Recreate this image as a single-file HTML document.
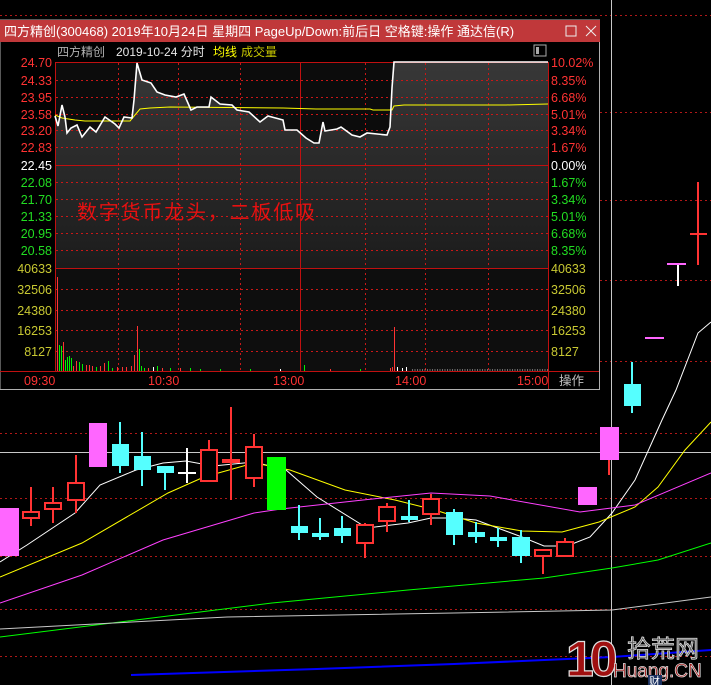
<!DOCTYPE html>
<html><head><meta charset="utf-8"><style>
html,body{margin:0;padding:0;background:#000;width:711px;height:685px;overflow:hidden}
svg{display:block}
text{font-family:"Liberation Sans","Noto Sans CJK SC",sans-serif}
</style></head><body>
<svg width="711" height="685" viewBox="0 0 711 685" xmlns="http://www.w3.org/2000/svg">
<rect width="711" height="685" fill="#000"/>
<g stroke="#b01818" stroke-width="1" stroke-dasharray="2 3">
<line x1="0" y1="15.5" x2="711" y2="15.5"/>
<line x1="0" y1="112.5" x2="711" y2="112.5"/>
<line x1="0" y1="200.5" x2="711" y2="200.5"/>
<line x1="0" y1="280.5" x2="711" y2="280.5"/>
<line x1="0" y1="361.5" x2="711" y2="361.5"/>
<line x1="0" y1="433.5" x2="711" y2="433.5"/>
<line x1="0" y1="498.5" x2="711" y2="498.5"/>
<line x1="0" y1="556.5" x2="711" y2="556.5"/>
<line x1="0" y1="609.5" x2="711" y2="609.5"/>
<line x1="0" y1="656.5" x2="711" y2="656.5"/>
</g>
<line x1="0" y1="452.5" x2="711" y2="452.5" stroke="#c8c8c8"/>
<line x1="611.5" y1="0" x2="611.5" y2="685" stroke="#c8c8c8"/>
<g fill="none" stroke-width="1">
<polyline stroke="#ffffff" points="0,562 27,545 75,513 100,485 136,470 163,463 186,461 213,466 254,462 286,470 317,497 367,528 408,523 431,518 454,518 476,520 522,537 544,546 567,546 590,537 612,513 635,480 653,440 662,420 676,390 698,333 711,322"/>
<polyline stroke="#ffff00" points="0,577 82,543 168,493 204,477 254,463 290,470 345,490 395,500 435,510 476,523 522,531 562,532 599,522 635,507 658,487 685,450 711,422"/>
<polyline stroke="#ff40ff" points="0,603 82,575 163,540 254,513 281,509 363,500 431,493 490,496 580,512 635,505 711,473"/>
<polyline stroke="#00ff00" points="0,637 136,620 272,603 408,590 544,578 612,568 658,560 711,543"/>
<polyline stroke="#c8c8c8" points="0,629 227,617 454,613 612,610 711,597"/>
<polyline stroke="#0000ff" stroke-width="2" points="131,675 317,669 454,664 612,657 711,650"/>
</g>
<g stroke-width="2">
<rect x="0" y="508" width="19" height="48" fill="#ff66ff"/>
<line x1="31" y1="487" x2="31" y2="526" stroke="#ff3333"/><rect x="23" y="512" width="16" height="6" fill="#000" stroke="#ff3333"/>
<line x1="53" y1="487" x2="53" y2="523" stroke="#ff3333"/><rect x="45" y="503" width="16" height="6" fill="#000" stroke="#ff3333"/>
<line x1="76" y1="455" x2="76" y2="513" stroke="#ff3333"/><rect x="68" y="483" width="16" height="17" fill="#000" stroke="#ff3333"/>
<rect x="89" y="423" width="18" height="44" fill="#ff66ff"/>
<line x1="120" y1="422" x2="120" y2="473" stroke="#55ffff"/><rect x="112" y="444" width="17" height="22" fill="#55ffff" stroke="none"/>
<line x1="142" y1="432" x2="142" y2="486" stroke="#55ffff"/><rect x="134" y="456" width="17" height="14" fill="#55ffff" stroke="none"/>
<line x1="165" y1="466" x2="165" y2="490" stroke="#55ffff"/><rect x="157" y="466" width="17" height="7" fill="#55ffff" stroke="none"/>
<line x1="187" y1="448" x2="187" y2="483" stroke="#fff"/><line x1="178" y1="473" x2="196" y2="473" stroke="#fff"/>
<line x1="209" y1="440" x2="209" y2="481" stroke="#ff3333"/><rect x="201" y="450" width="16" height="31" fill="#000" stroke="#ff3333"/>
<line x1="231" y1="407" x2="231" y2="500" stroke="#ff3333"/><rect x="222" y="459" width="18" height="4" fill="#ff3333" stroke="none"/>
<line x1="254" y1="434" x2="254" y2="487" stroke="#ff3333"/><rect x="246" y="447" width="16" height="31" fill="#000" stroke="#ff3333"/>
<rect x="267" y="457" width="19" height="53" fill="#00ff00"/>
<line x1="299" y1="505" x2="299" y2="540" stroke="#55ffff"/><rect x="291" y="526" width="17" height="7" fill="#55ffff" stroke="none"/>
<line x1="320" y1="518" x2="320" y2="540" stroke="#55ffff"/><rect x="312" y="533" width="17" height="4" fill="#55ffff" stroke="none"/>
<line x1="342" y1="516" x2="342" y2="543" stroke="#55ffff"/><rect x="334" y="528" width="17" height="8" fill="#55ffff" stroke="none"/>
<line x1="365" y1="523" x2="365" y2="558" stroke="#ff3333"/><rect x="357" y="525" width="16" height="18" fill="#000" stroke="#ff3333"/>
<line x1="387" y1="503" x2="387" y2="532" stroke="#ff3333"/><rect x="379" y="507" width="16" height="14" fill="#000" stroke="#ff3333"/>
<line x1="409" y1="500" x2="409" y2="522" stroke="#55ffff"/><rect x="401" y="516" width="17" height="4" fill="#55ffff" stroke="none"/>
<line x1="431" y1="494" x2="431" y2="525" stroke="#ff3333"/><rect x="423" y="499" width="16" height="15" fill="#000" stroke="#ff3333"/>
<line x1="454" y1="509" x2="454" y2="545" stroke="#55ffff"/><rect x="446" y="512" width="17" height="23" fill="#55ffff" stroke="none"/>
<line x1="476" y1="522" x2="476" y2="543" stroke="#55ffff"/><rect x="468" y="532" width="17" height="5" fill="#55ffff" stroke="none"/>
<line x1="498" y1="528" x2="498" y2="547" stroke="#55ffff"/><rect x="490" y="537" width="17" height="4" fill="#55ffff" stroke="none"/>
<line x1="521" y1="530" x2="521" y2="563" stroke="#55ffff"/><rect x="512" y="537" width="18" height="19" fill="#55ffff" stroke="none"/>
<line x1="543" y1="549" x2="543" y2="574" stroke="#ff3333"/><rect x="535" y="550" width="16" height="6" fill="#000" stroke="#ff3333"/>
<line x1="565" y1="538" x2="565" y2="556" stroke="#ff3333"/><rect x="557" y="542" width="16" height="14" fill="#000" stroke="#ff3333"/>
<rect x="578" y="487" width="19" height="18" fill="#ff66ff"/>
<line x1="609" y1="427" x2="609" y2="475" stroke="#ff3333"/><rect x="600" y="427" width="19" height="33" fill="#ff66ff"/>
<line x1="632" y1="362" x2="632" y2="413" stroke="#55ffff"/><rect x="624" y="384" width="17" height="22" fill="#55ffff" stroke="none"/>
<line x1="645" y1="338" x2="664" y2="338" stroke="#ff66ff"/>
<line x1="678" y1="264" x2="678" y2="286" stroke="#fff"/><line x1="667" y1="264" x2="686" y2="264" stroke="#ff66ff"/>
<line x1="698" y1="182" x2="698" y2="265" stroke="#ff3333"/><line x1="690" y1="234" x2="707" y2="234" stroke="#ff3333" stroke-width="2"/>
</g>
<text x="566" y="676" font-size="50" font-weight="bold" fill="#a01010" stroke="#e0e0e0" stroke-width="1.2" letter-spacing="-4">10</text>
<text x="627" y="657" font-size="24" fill="#555" stroke="#ddd" stroke-width="0.8">拾荒网</text>
<text x="613" y="677" font-size="19" fill="#a01010" stroke="#ddd" stroke-width="0.8">Huang.CN</text>
<rect x="648" y="675" width="14" height="10" fill="#1a3060"/><text x="649" y="685" font-size="11" fill="#fff">财</text>

<rect x="0" y="20" width="599.5" height="369.5" fill="#000" stroke="#b0b0b0" stroke-width="1"/>
<rect x="0" y="20" width="600" height="22" fill="#c0383a"/>
<text x="4" y="36" font-size="13" fill="#fff">四方精创(300468) 2019年10月24日 星期四 PageUp/Down:前后日 空格键:操作 通达信(R)</text>
<rect x="566" y="26" width="10" height="10" fill="none" stroke="#eee"/>
<path d="M586 26 L596 36 M596 26 L586 36" stroke="#eee" stroke-width="1"/>
<text x="57" y="56" font-size="12" fill="#b0b0b0">四方精创</text>
<text x="116" y="56" font-size="12" fill="#e8e8e8">2019-10-24 分时</text>
<text x="213" y="56" font-size="12" fill="#ffff00">均线</text>
<text x="241" y="56" font-size="12" fill="#c8c800">成交量</text>
<rect x="534" y="45" width="12" height="11" fill="none" stroke="#aaa"/><rect x="536" y="47" width="3" height="7" fill="#aaa"/>
<defs><linearGradient id="g" x1="0" y1="62" x2="0" y2="268" gradientUnits="userSpaceOnUse"><stop offset="0" stop-color="#383838"/><stop offset="0.4" stop-color="#2c2c2c"/><stop offset="1" stop-color="#1c1c1c"/></linearGradient></defs>
<rect x="55.5" y="62.5" width="493" height="206" fill="#0c0c0c"/>
<rect x="55.5" y="268.5" width="493" height="103" fill="#0e0e0e"/>
<path d="M55,116 58,126 62,105 65,117 67,133 71,128 77,125 82,137 90,127 96,132 105,117 115,124 119,128 124,117 132,118 134,100 137,63 142,80 151,83 157,92 165,95 176,97 184,94 191,110 197,107 209,107 211,97 220,104 232,105 237,110 249,112 260,122 268,116 283,120 285,130 297,130 306,138 314,143 319,143 323,122 325,131 337,129 341,127 352,135 360,137 367,133 387,135 390,127 392,88 394,62 548,62 548,268 55,268 Z" fill="url(#g)"/>
<g stroke="#c81818" stroke-dasharray="2 3">
<line x1="56" y1="80.5" x2="548" y2="80.5"/><line x1="56" y1="97.5" x2="548" y2="97.5"/><line x1="56" y1="114.5" x2="548" y2="114.5"/><line x1="56" y1="130.5" x2="548" y2="130.5"/><line x1="56" y1="147.5" x2="548" y2="147.5"/>
<line x1="56" y1="182.5" x2="548" y2="182.5"/><line x1="56" y1="199.5" x2="548" y2="199.5"/><line x1="56" y1="216.5" x2="548" y2="216.5"/><line x1="56" y1="233.5" x2="548" y2="233.5"/><line x1="56" y1="250.5" x2="548" y2="250.5"/>
<line x1="56" y1="289.5" x2="548" y2="289.5"/><line x1="56" y1="310.5" x2="548" y2="310.5"/><line x1="56" y1="330.5" x2="548" y2="330.5"/><line x1="56" y1="351.5" x2="548" y2="351.5"/>
<line x1="118.5" y1="63" x2="118.5" y2="371"/><line x1="178.5" y1="63" x2="178.5" y2="371"/><line x1="240.5" y1="63" x2="240.5" y2="371"/><line x1="365.5" y1="63" x2="365.5" y2="371"/><line x1="425.5" y1="63" x2="425.5" y2="371"/><line x1="488.5" y1="63" x2="488.5" y2="371"/>
</g>
<g stroke="#c01010" fill="none">
<rect x="55.5" y="62.5" width="493" height="309"/>
<line x1="56" y1="165.5" x2="548" y2="165.5"/><line x1="56" y1="268.5" x2="548" y2="268.5"/>
<line x1="300.5" y1="63" x2="300.5" y2="371"/>
<line x1="0" y1="371.5" x2="599" y2="371.5"/>
</g>
<polyline fill="none" stroke="#ffff00" stroke-width="1" points="55,115 62,118 75,120 85,121 130,121 140,109 150,108 170,107 283,108 316,109 370,109 373,110 392,110 394,106 404,105 506,105 548,104"/>
<polyline fill="none" stroke="#fff" stroke-width="1.6" points="55,116 58,126 62,105 65,117 67,133 71,128 77,125 82,137 90,127 96,132 105,117 115,124 119,128 124,117 132,118 134,100 137,63 142,80 151,83 157,92 165,95 176,97 184,94 191,110 197,107 209,107 211,97 220,104 232,105 237,110 249,112 260,122 268,116 283,120 285,130 297,130 306,138 314,143 319,143 323,122 325,131 337,129 341,127 352,135 360,137 367,133 387,135 390,127 392,88 394,62 548,62"/>
<g stroke-width="1">
<line x1="57.5" y1="277" x2="57.5" y2="371" stroke="#ff3333"/>
<line x1="59.5" y1="345" x2="59.5" y2="371" stroke="#00ee00"/><line x1="61.5" y1="346" x2="61.5" y2="371" stroke="#00ee00"/>
<line x1="63.5" y1="342" x2="63.5" y2="371" stroke="#ff3333"/>
<line x1="65.5" y1="360" x2="65.5" y2="371" stroke="#00ee00"/><line x1="67.5" y1="357" x2="67.5" y2="371" stroke="#00ee00"/><line x1="69.5" y1="356" x2="69.5" y2="371" stroke="#00ee00"/>
<line x1="71.5" y1="358" x2="71.5" y2="371" stroke="#00ee00"/><line x1="73.5" y1="366" x2="73.5" y2="371" stroke="#ff3333"/><line x1="76.5" y1="361" x2="76.5" y2="371" stroke="#ff3333"/>
<line x1="79.5" y1="362" x2="79.5" y2="371" stroke="#00ee00"/><line x1="82.5" y1="364" x2="82.5" y2="371" stroke="#00ee00"/><line x1="86.5" y1="365" x2="86.5" y2="371" stroke="#ff3333"/>
<line x1="89.5" y1="365" x2="89.5" y2="371" stroke="#ff3333"/><line x1="92.5" y1="366" x2="92.5" y2="371" stroke="#ff3333"/><line x1="96.5" y1="367" x2="96.5" y2="371" stroke="#00ee00"/>
<line x1="100.5" y1="366" x2="100.5" y2="371" stroke="#ff3333"/><line x1="104.5" y1="363" x2="104.5" y2="371" stroke="#ff3333"/><line x1="108.5" y1="361" x2="108.5" y2="371" stroke="#00ee00"/>
<line x1="112.5" y1="368" x2="112.5" y2="371" stroke="#00ee00"/><line x1="117.5" y1="367" x2="117.5" y2="371" stroke="#ff3333"/><line x1="122.5" y1="367" x2="122.5" y2="371" stroke="#ff3333"/>
<line x1="126.5" y1="367" x2="126.5" y2="371" stroke="#ff3333"/><line x1="131.5" y1="366" x2="131.5" y2="371" stroke="#ff3333"/><line x1="134.5" y1="355" x2="134.5" y2="371" stroke="#ff3333"/>
<line x1="137.5" y1="326" x2="137.5" y2="371" stroke="#ff3333"/><line x1="139.5" y1="349" x2="139.5" y2="371" stroke="#00ee00"/><line x1="141.5" y1="366" x2="141.5" y2="371" stroke="#00ee00"/>
<line x1="144.5" y1="368" x2="144.5" y2="371" stroke="#00ee00"/><line x1="148.5" y1="368" x2="148.5" y2="371" stroke="#ff3333"/><line x1="153.5" y1="367" x2="153.5" y2="371" stroke="#fff"/>
<line x1="157.5" y1="366" x2="157.5" y2="371" stroke="#00ee00"/><line x1="162.5" y1="368" x2="162.5" y2="371" stroke="#ff3333"/><line x1="170.5" y1="368" x2="170.5" y2="371" stroke="#00ee00"/>
<line x1="180.5" y1="368" x2="180.5" y2="371" stroke="#ff3333"/><line x1="190.5" y1="368" x2="190.5" y2="371" stroke="#00ee00"/><line x1="200.5" y1="369" x2="200.5" y2="371" stroke="#00ee00"/>
<line x1="220.5" y1="369" x2="220.5" y2="371" stroke="#00ee00"/><line x1="250.5" y1="369" x2="250.5" y2="371" stroke="#00ee00"/><line x1="280.5" y1="369" x2="280.5" y2="371" stroke="#fff"/>
<line x1="304.5" y1="365" x2="304.5" y2="371" stroke="#00ee00"/><line x1="330.5" y1="369" x2="330.5" y2="371" stroke="#ff3333"/><line x1="360.5" y1="369" x2="360.5" y2="371" stroke="#00ee00"/>
<line x1="390.5" y1="368" x2="390.5" y2="371" stroke="#ff3333"/><line x1="392.5" y1="367" x2="392.5" y2="371" stroke="#ff3333"/>
<line x1="394.5" y1="327" x2="394.5" y2="371" stroke="#ff3333"/><line x1="397.5" y1="367" x2="397.5" y2="371" stroke="#fff"/><line x1="402.5" y1="368" x2="402.5" y2="371" stroke="#fff"/><line x1="406.5" y1="367" x2="406.5" y2="371" stroke="#fff"/>
<line x1="412" y1="370" x2="548" y2="370" stroke="#ccc" stroke-dasharray="1 1.5"/>
</g>
<text x="77" y="219" font-size="20" fill="#e81010" letter-spacing="1.8">数字货币龙头，二板低吸</text>
<g font-size="12.5" text-anchor="end">
<g fill="#ff3333"><text x="52" y="67">24.70</text><text x="52" y="85">24.33</text><text x="52" y="102">23.95</text><text x="52" y="119">23.58</text><text x="52" y="135">23.20</text><text x="52" y="152">22.83</text></g>
<text x="52" y="170" fill="#fff">22.45</text>
<g fill="#22dd22"><text x="52" y="187">22.08</text><text x="52" y="204">21.70</text><text x="52" y="221">21.33</text><text x="52" y="238">20.95</text><text x="52" y="255">20.58</text></g>
<g fill="#c8c832"><text x="52" y="273">40633</text><text x="52" y="294">32506</text><text x="52" y="315">24380</text><text x="52" y="335">16253</text><text x="52" y="356">8127</text></g>
</g>
<g font-size="12.5">
<g fill="#ff3333"><text x="551" y="67">10.02%</text><text x="551" y="85">8.35%</text><text x="551" y="102">6.68%</text><text x="551" y="119">5.01%</text><text x="551" y="135">3.34%</text><text x="551" y="152">1.67%</text></g>
<text x="551" y="170" fill="#fff">0.00%</text>
<g fill="#22dd22"><text x="551" y="187">1.67%</text><text x="551" y="204">3.34%</text><text x="551" y="221">5.01%</text><text x="551" y="238">6.68%</text><text x="551" y="255">8.35%</text></g>
<g fill="#c8c832"><text x="551" y="273">40633</text><text x="551" y="294">32506</text><text x="551" y="315">24380</text><text x="551" y="335">16253</text><text x="551" y="356">8127</text></g>
</g>
<g font-size="12.5" fill="#ff3333"><text x="24" y="385">09:30</text><text x="148" y="385">10:30</text><text x="273" y="385">13:00</text><text x="395" y="385">14:00</text><text x="517" y="385">15:00</text></g>
<text x="559" y="385" font-size="12.5" fill="#c0c0c0">操作</text>
<line x1="548.5" y1="371" x2="548.5" y2="389" stroke="#c01010"/>
</svg>
</body></html>
